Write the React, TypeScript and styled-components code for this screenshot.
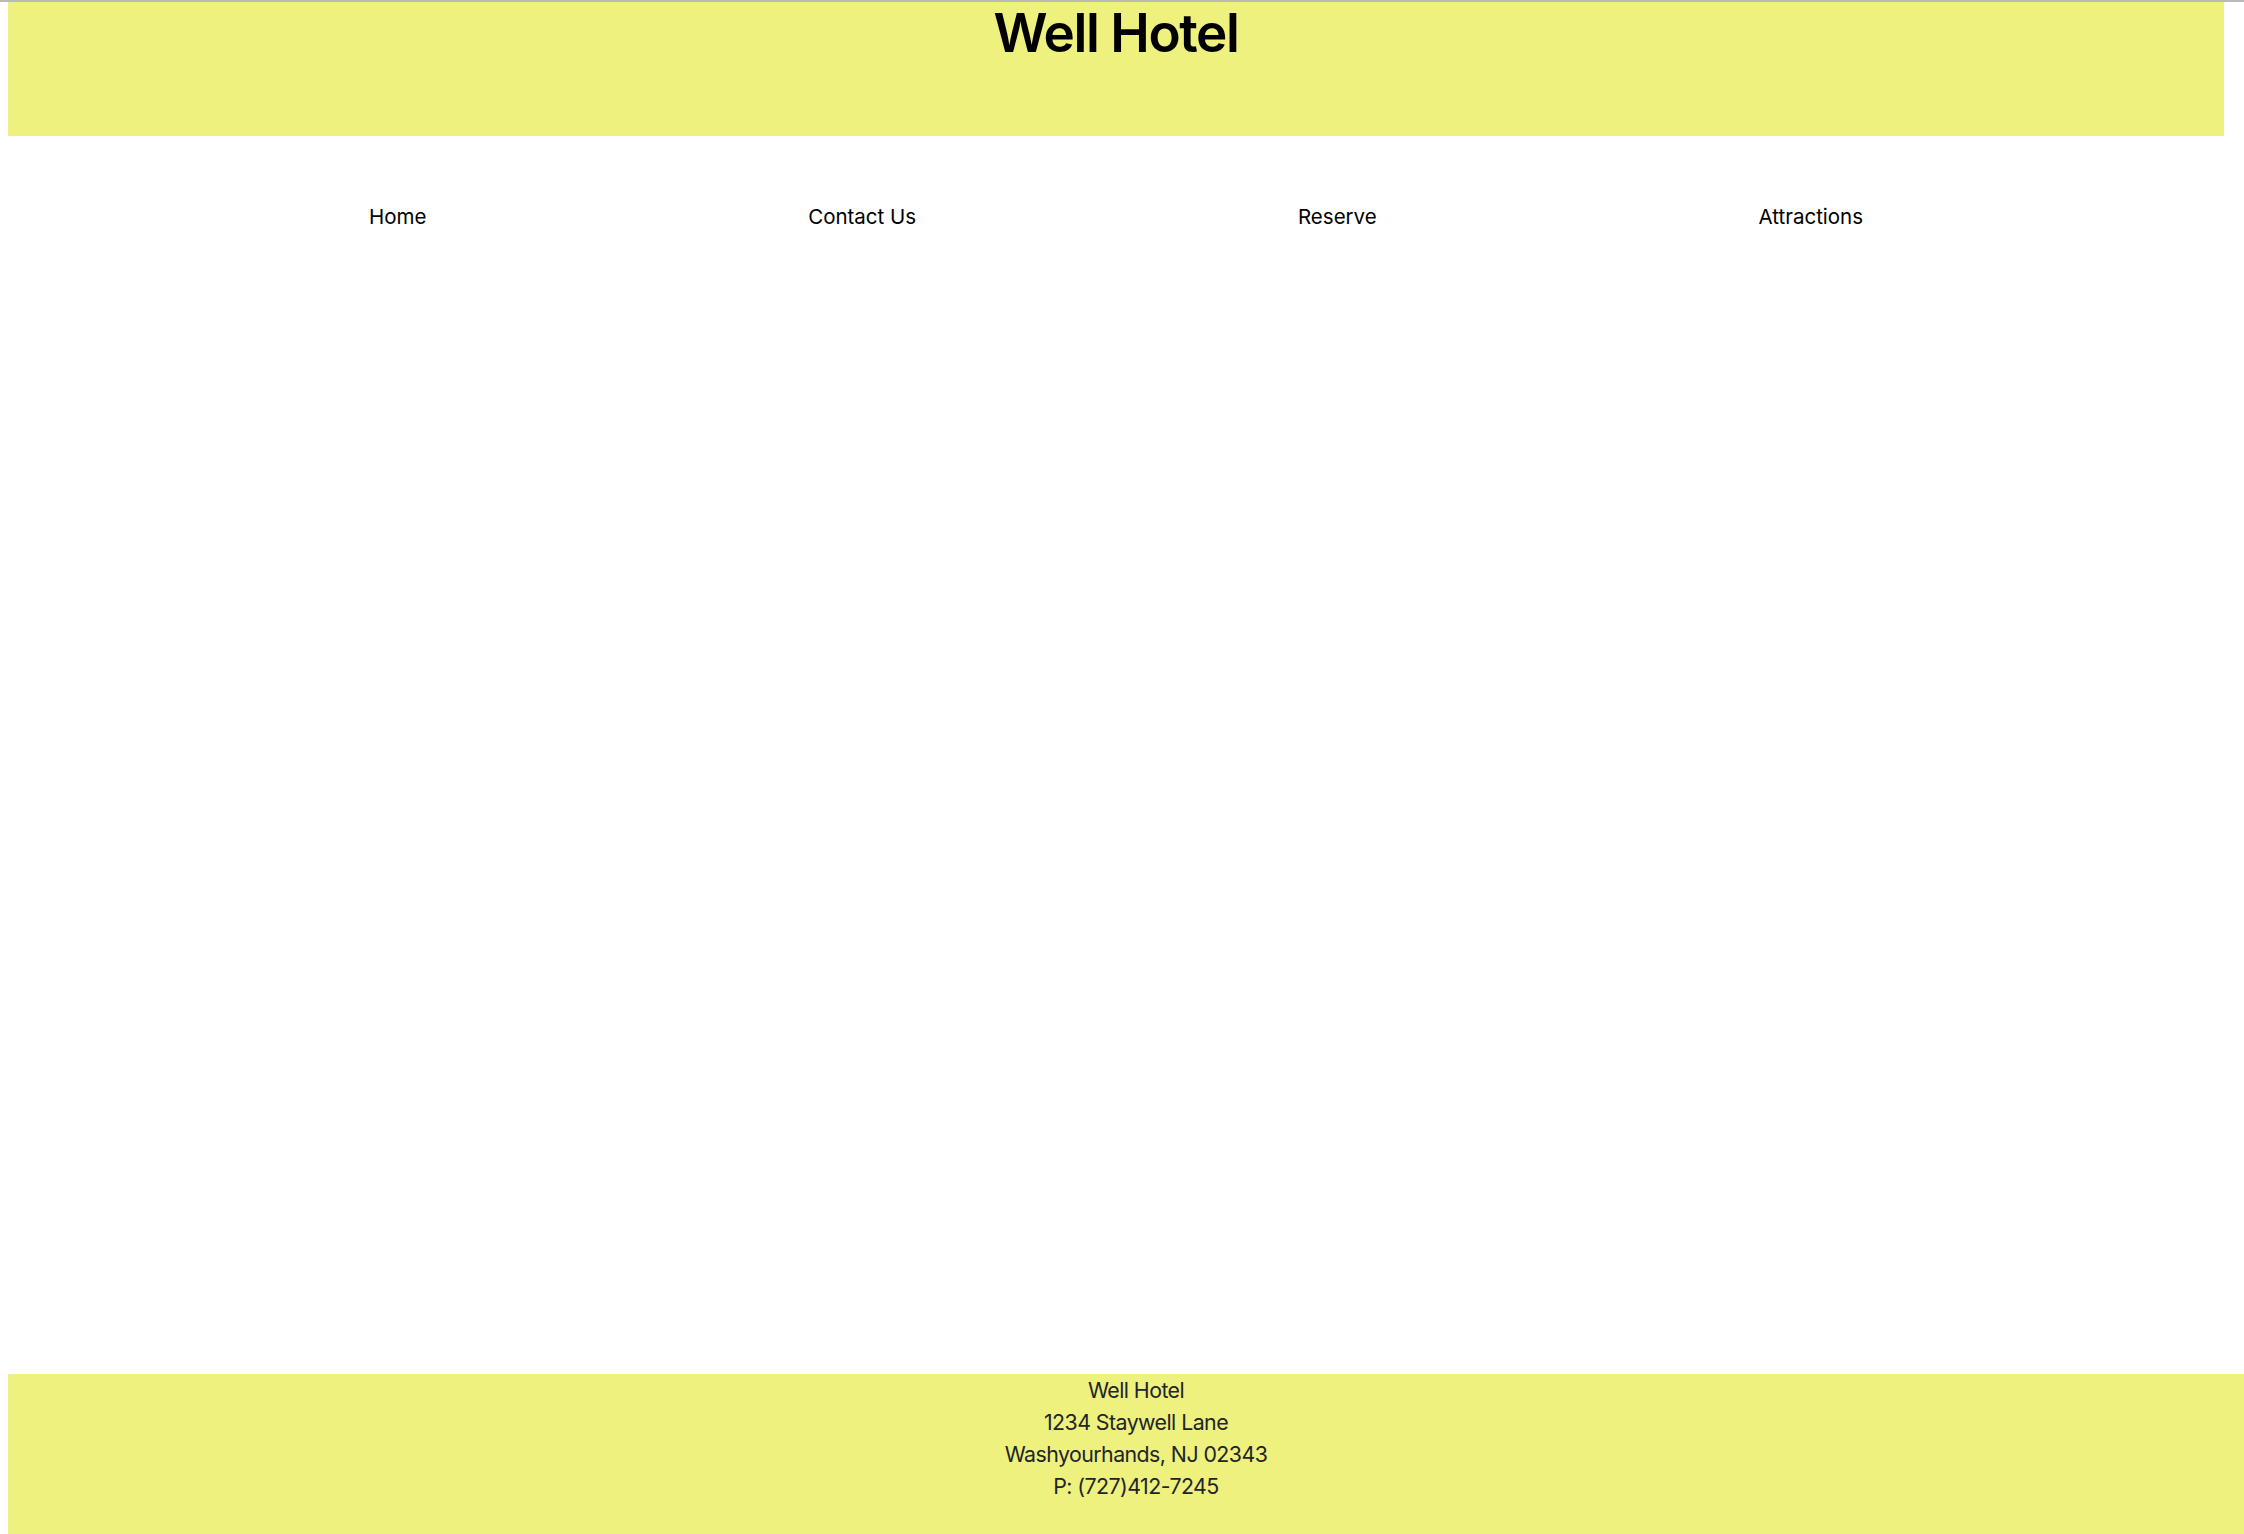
import React from "react";
import styled, { createGlobalStyle } from "styled-components";

const Global = createGlobalStyle`
  html, body { margin: 0; padding: 0; background: #ffffff; }
  body { overflow: hidden; font-family: Inter, "Noto Sans", sans-serif; }
`;

const Page = styled.div`
  min-height: 100vh;
  box-sizing: border-box;
  border-top: 2px solid #b9b9b9;
  padding-left: 8px;
  display: flex;
  flex-direction: column;
`;

const Header = styled.header`
  height: 134px;
  margin-right: 20px;
  background: #eff17e;
  text-align: center;
`;

const Title = styled.h1`
  margin: 0;
  font-size: 53px;
  line-height: 1.2;
  font-weight: 600;
  letter-spacing: -1.4px;
  color: #000;
`;

const Nav = styled.nav`
  margin: 65px 20px 0 0;
  padding: 0 170px;
  display: flex;
  justify-content: space-around;
`;

const NavLink = styled.a`
  font-size: 20.5px;
  line-height: 32px;
  color: #000;
  text-decoration: none;
`;

const Main = styled.main`
  flex: 1;
`;

const Footer = styled.footer`
  height: 160px;
  margin-right: -20px;
  background: #eff17e;
  text-align: center;
  color: #212529;
  font-size: 21.33px;
  line-height: 32px;
  letter-spacing: -0.55px;
`;

const Line = styled.div``;

export default function App() {
  const links = ["Home", "Contact Us", "Reserve", "Attractions"];
  return (
    <>
      <Global />
      <Page>
        <Header>
          <Title>Well Hotel</Title>
        </Header>
        <Nav>
          {links.map((l) => (
            <NavLink key={l} href="#">
              {l}
            </NavLink>
          ))}
        </Nav>
        <Main />
        <Footer>
          <Line>Well Hotel</Line>
          <Line>1234 Staywell Lane</Line>
          <Line>Washyourhands, NJ 02343</Line>
          <Line>P: (727)412-7245</Line>
        </Footer>
      </Page>
    </>
  );
}
